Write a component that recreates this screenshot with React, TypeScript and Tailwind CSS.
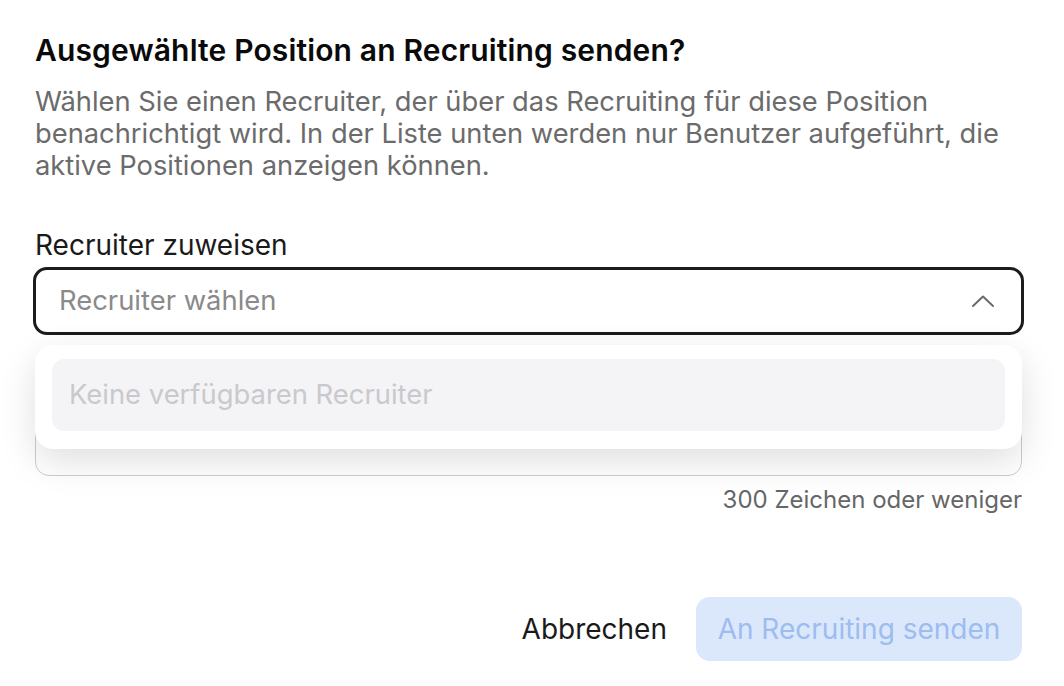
import React from "react";

const App: React.FC = () => {
  return (
    <div
      className="min-h-[686px] w-[1064px] bg-white text-[#171717]"
      style={{ fontFamily: "Inter, 'Noto Sans', sans-serif" }}
    >
      <div className="pl-[35px] pr-[42px] pt-[32px]">
        <h2 className="text-[30px] font-semibold leading-[36px] tracking-[0.005em] text-[#0a0a0a]">
          Ausgewählte Position an Recruiting senden?
        </h2>
        <p className="mt-[18px] text-[27.3px] leading-[32px] text-[#6b6b6b]">
          Wählen Sie einen Recruiter, der über das Recruiting für diese Position benachrichtigt wird. In der
          Liste unten werden nur Benutzer aufgeführt, die aktive Positionen anzeigen können.
        </p>

        <label className="mt-[47px] block text-[28px] leading-[32px] text-[#1a1a1a]">
          Recruiter zuweisen
        </label>

        {/* select + geöffnetes Menü */}
        <div className="relative mt-[6px]">
          <div className="-mx-[2px] flex h-[68px] items-center justify-between rounded-[14px] border-[3px] border-[#1c1c1c] bg-white pl-[23px] pr-[26px]">
            <span className="text-[27.4px] text-[#8a8a8a]">Recruiter wählen</span>
            <svg width="24" height="14" viewBox="0 0 24 14" fill="none" aria-hidden="true">
              <polyline
                points="2,12 12,2.5 22,12"
                stroke="#6b6b6b"
                strokeWidth="2"
                strokeLinecap="round"
                strokeLinejoin="round"
              />
            </svg>
          </div>

          {/* Notiz-Feld, vom Menü verdeckt */}
          <div className="mt-[41px] h-[100px] rounded-[14px] border border-[#cdcdcd] bg-white" />

          <div className="absolute left-0 right-0 top-[78px] z-10 rounded-[18px] bg-white px-[17px] pb-[18px] pt-[14px] shadow-[0_12px_36px_rgba(0,0,0,0.13)]">
            <div className="flex h-[72px] items-center rounded-[12px] bg-[#f4f4f6] pl-[17px] text-[27.4px] text-[#c9c9cd]">
              Keine verfügbaren Recruiter
            </div>
          </div>
        </div>

        <p className="mt-[10px] text-right text-[24px] leading-[28px] text-[#666666]">
          300 Zeichen oder weniger
        </p>

        <div className="mt-[83px] flex items-center justify-end gap-[9px]">
          <button className="h-[64px] px-[20px] text-[28px] text-[#1a1a1a]">Abbrechen</button>
          <button className="h-[64px] w-[326px] rounded-[14px] bg-[#dbe8fc] text-[28px] text-[#9dbcef]">
            An Recruiting senden
          </button>
        </div>
      </div>
    </div>
  );
};

export default App;
